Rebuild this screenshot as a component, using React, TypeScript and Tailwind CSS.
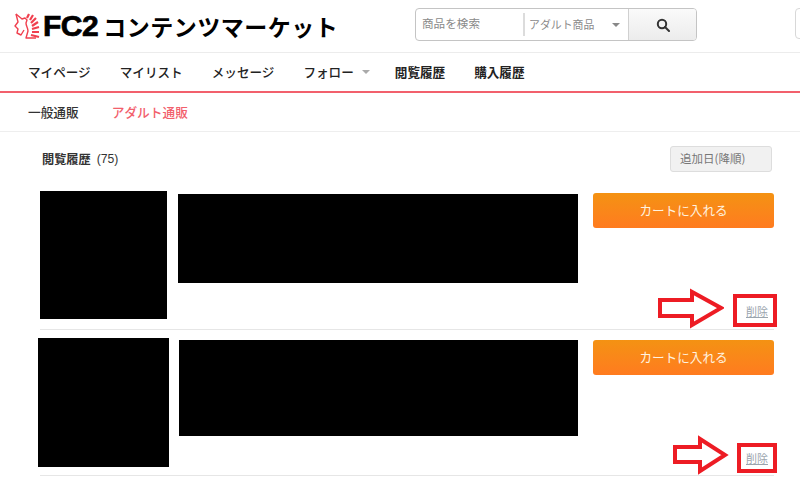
const jpFont = "font-['Noto_Sans_CJK_JP','Liberation_Sans',sans-serif]";

const Logo = () => (
  <div className="flex items-center">
    <svg width="27" height="27" viewBox="0 0 27 27" className="mr-[2px]" fill="none" stroke="#f0404f" strokeWidth="1.4" strokeLinejoin="round">
      <path d="M2 1 L8 6 L11 5 L13 7 L12 10 C12 13 14 15 14 18 L12 25 L22 25" />
      <path d="M2 1 L4 9 L1 13 L4 16 L3 20 L7 22 L10 17" />
      <path d="M13 5 L15 1 M16 7 L19 2 M17 10 L22 5 M18 13 L24 9 M18 16 L25 14 M18 19 L25 19 M17 22 L25 24" strokeWidth="2.2" />
    </svg>
    <span className="font-['Liberation_Sans',sans-serif] text-[30px] leading-none font-bold tracking-[-0.5px] text-black [-webkit-text-stroke:0.7px_black]">FC2</span>
    <span className={`${jpFont} ml-[5px] text-[23px] leading-none font-bold tracking-[0.5px] text-black`}>コンテンツマーケット</span>
  </div>
);

const SearchBox = () => (
  <div className={`${jpFont} flex h-[33px] w-[282px] overflow-hidden rounded-[4px] border border-[#c4c4c4] text-[#8a8a8a]`}>
    <div className="flex w-[107px] items-center pl-[6px] text-[11.6px]">
      <span className="-mt-[2px]">商品を検索</span>
    </div>
    <div className="my-[4px] w-[2px] bg-[#dcdcdc]" />
    <div className="flex w-[103px] items-center justify-between pr-[8px] pl-[4px] text-[10.9px]">
      <span>アダルト商品</span>
      <span className="h-0 w-0 border-x-[4px] border-t-[4px] border-x-transparent border-t-[#888]" />
    </div>
    <div className="flex flex-1 items-center justify-center border-l border-[#d0d0d0] bg-gradient-to-b from-[#fafafa] to-[#ececec]">
      <svg width="14" height="14" viewBox="0 0 14 14" fill="none" stroke="#333" strokeWidth="2">
        <circle cx="6" cy="6" r="4.2" />
        <path d="M9 9 L13 13" strokeLinecap="round" />
      </svg>
    </div>
  </div>
);

const Header = () => (
  <header className="relative flex h-[53px] items-center border-b border-[#ececec] pl-[14px]">
    <Logo />
    <div className="absolute top-[8px] left-[415px]">
      <SearchBox />
    </div>
    <div className="absolute top-[8px] left-[795px] h-[31px] w-[20px] rounded-[4px] border border-[#d8d8d8]" />
  </header>
);

const NavMenu = () => (
  <nav className={`${jpFont} flex h-[40px] items-center gap-[29px] border-b-2 border-[#f2606c] pl-[28px] text-[12.6px] font-medium text-[#222]`}>
    <span>マイページ</span>
    <span>マイリスト</span>
    <span>メッセージ</span>
    <span className="-mr-[4px] flex items-center gap-[8px]">
      フォロー
      <span className="h-0 w-0 border-x-[4px] border-t-[4px] border-x-transparent border-t-[#aaa]" />
    </span>
    <span className="font-bold">閲覧履歴</span>
    <span className="font-bold">購入履歴</span>
  </nav>
);

const SubNav = () => (
  <div className={`${jpFont} flex h-[39px] items-center gap-[33px] border-b border-[#eeeeee] pl-[28px] text-[12.7px] font-medium`}>
    <span className="text-[#333]">一般通販</span>
    <span className="text-[#f2606c]">アダルト通販</span>
  </div>
);

type RowProps = {
  imageClass: string;
  barClass: string;
  arrowClass: string;
  boxClass: string;
  deleteClass: string;
  buttonClass: string;
  rowClass: string;
  arrowPoints: string;
  arrowW: number;
  arrowH: number;
};

const HistoryRow = (p: RowProps) => (
  <div className={`relative flex w-[734px] items-start border-b border-[#e6e6e6] ${p.rowClass}`}>
    <div className={`shrink-0 bg-black ${p.imageClass}`} />
    <div className={`shrink-0 bg-black ${p.barClass}`} />
    <button className={`${jpFont} flex h-[35px] w-[181px] shrink-0 items-center justify-center rounded-[3px] bg-gradient-to-b from-[#f49212] to-[#ff7b1f] text-[12.6px] text-[#fff3e0] ${p.buttonClass}`}>
      カートに入れる
    </button>
    <span className={`${jpFont} absolute text-[11px] text-[#9aa4ad] underline ${p.deleteClass}`}>削除</span>
    <svg width={p.arrowW} height={p.arrowH} viewBox={`0 0 ${p.arrowW} ${p.arrowH}`} className={`absolute ${p.arrowClass}`}>
      <polygon points={p.arrowPoints} fill="white" stroke="#ed1c24" strokeWidth="4" />
    </svg>
    <div className={`absolute border-4 border-[#ed1c24] ${p.boxClass}`} />
  </div>
);

const App = () => {
  return (
    <div className="h-[477px] w-[800px] overflow-hidden bg-white">
      <Header />
      <NavMenu />
      <SubNav />
      <main className="pl-[40px]">
        <div className={`${jpFont} flex h-[59px] w-[732px] items-start justify-between pt-[14px]`}>
          <div className="flex items-center pl-[2px] pt-[4px] text-[12.2px] text-[#333]">
            <span className="font-bold">閲覧履歴</span>
            <span className="ml-[6px] font-['Liberation_Sans',sans-serif]">(75)</span>
          </div>
          <div className="flex h-[26px] w-[102px] items-center justify-start rounded-[3px] border border-[#dddddd] bg-[#f1f1f1] pl-[9px] text-[11.5px] text-[#777]">
            追加日(降順)
          </div>
        </div>
        <HistoryRow
          rowClass="h-[139px]"
          imageClass="h-[128px] w-[127px]"
          barClass="mt-[3px] ml-[11px] h-[89px] w-[400px]"
          buttonClass="mt-[2px] ml-[15px]"
          deleteClass="top-[112px] left-[706px]"
          arrowClass="top-[97px] left-[618px]"
          boxClass="top-[103px] left-[693px] h-[33px] w-[44px]"
          arrowPoints="2,12 34,12 34,4 63,20 34,37 34,28 2,28"
          arrowW={66}
          arrowH={41}
        />
        <div className="relative -ml-[2px]">
          <HistoryRow
            rowClass="ml-[2px] h-[146px]"
            imageClass="-ml-[2px] mt-[8px] h-[129px] w-[131px]"
            barClass="mt-[10px] ml-[10px] h-[96px] w-[399px]"
            buttonClass="mt-[10px] ml-[15px]"
            deleteClass="top-[120px] left-[706px]"
            arrowClass="top-[105px] left-[632px]"
            boxClass="top-[113px] left-[697px] h-[30px] w-[40px]"
            arrowPoints="3,12 28,12 28,4 53,20 28,36 28,27 3,27"
            arrowW={58}
            arrowH={40}
          />
        </div>
      </main>
    </div>
  );
};

export default App;
